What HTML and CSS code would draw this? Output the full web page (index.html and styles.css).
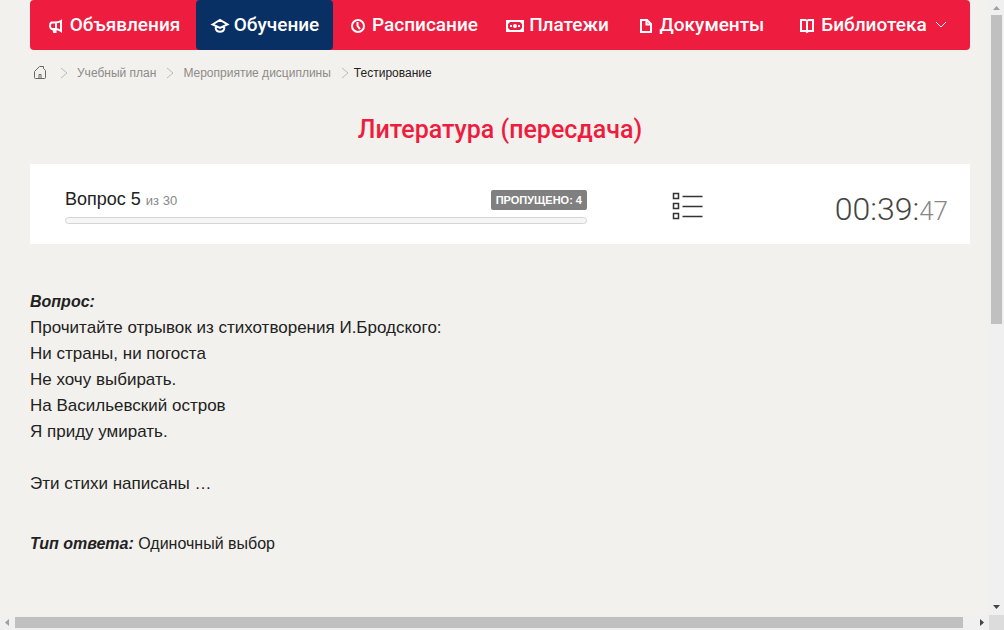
FILE: index.html
```html
<!DOCTYPE html>
<html lang="ru">
<head>
<meta charset="utf-8">
<title>Тестирование</title>
<meta name="viewport" content="width=device-width, initial-scale=1">
<link rel="stylesheet" href="styles.css">
</head>
<body class="shell">
<div class="page">
  <nav class="menu" aria-label="Главное меню">
    <a class="menu-item" href="#"><svg class="menu-icon" viewBox="0 0 20 20"><path d="M5.500 7.500H9c3 0 4.500-.5 6-1.500v10c-2-1.500-3-2-6-2H5.500c-2-1-2-5.500 0-6.500zM10 7.500v6"/><path class="menu-icon-fill" d="M6 13h4.500v5H7.300z"/></svg>Объявления</a>
    <a class="menu-item menu-item-active" href="#"><svg class="menu-icon" viewBox="0 0 20 20"><path d="M2.500 9.500L10 5l7.500 4.500L10 13zM5.800 11v3c1.200 3.800 7.200 3.800 8.400 0v-3"/></svg>Обучение</a>
    <a class="menu-item" href="#"><svg class="menu-icon" viewBox="0 0 20 20"><circle cx="10" cy="11" r="6"/><path d="M9.500 7v4l2.500 3"/></svg>Расписание</a>
    <a class="menu-item" href="#"><svg class="menu-icon" viewBox="0 0 20 20"><path d="M2 6h16v10H2z"/><path class="menu-icon-fill" d="M2 6h4L2 10zM18 6h-4l4 4zM2 16h4l-4-4zM18 16h-4l4-4zM5 10h2v2H5zM13 10h2v2h-2z"/><circle class="menu-icon-fill" cx="10" cy="11" r="2"/></svg>Платежи</a>
    <a class="menu-item" href="#"><svg class="menu-icon" viewBox="0 0 20 20"><path d="M5 5h6l4 4v8H5zM10.500 5v4.500H15"/></svg>Документы</a>
    <a class="menu-item" href="#"><svg class="menu-icon" viewBox="0 0 20 20"><path d="M4 5h4.500L10 6l1.500-1H16v11h-4.500L10 17l-1.500-1H4zM10 6v11"/></svg>Библиотека<svg class="menu-arrow" viewBox="0 0 12 8"><path d="M1 1l5 5 5-5"/></svg></a>
  </nav>

  <nav class="crumbs" aria-label="Навигация">
    <a class="crumb crumb-home" href="#" aria-label="Главная"><svg class="home-icon" viewBox="0 0 14 14"><path d="M1.500 5.500l5-5h4v2l2 2v7a1 1 0 0 1-1 1h-9a1 1 0 0 1-1-1zM6 12.500v-4h2v4"/></svg></a>
    <svg class="crumb-arrow" viewBox="0 0 8 12"><path d="M1 1l6 5-6 5"/></svg>
    <a class="crumb" href="#">Учебный план</a>
    <svg class="crumb-arrow" viewBox="0 0 8 12"><path d="M1 1l6 5-6 5"/></svg>
    <a class="crumb" href="#">Мероприятие дисциплины</a>
    <svg class="crumb-arrow" viewBox="0 0 8 12"><path d="M1 1l6 5-6 5"/></svg>
    <span class="crumb crumb-current">Тестирование</span>
  </nav>

  <main>
    <h1 class="title">Литература (пересдача)</h1>
    <section class="panel">
      <div class="status">
        <div class="status-row">
          <label class="status-label" for="progress">Вопрос 5 <small class="status-total">из 30</small></label>
          <span class="badge">ПРОПУЩЕНО: 4</span>
        </div>
        <progress class="progress" id="progress" value="0" max="30"></progress>
      </div>
      <button class="list-button" type="button" aria-label="Список вопросов"><svg class="list-icon" viewBox="0 0 32 29"><path d="M1.500 1.500h5v5h-5zM1.500 11.500h5v5h-5zM1.500 21.500h5v5h-5z"/><path d="M10.500 4.500h20M10.500 14.500h20M10.500 24.500h20"/></svg></button>
      <time class="timer">00:39:<span class="timer-seconds">47</span></time>
    </section>

    <section class="question">
      <strong class="lead">Вопрос:</strong>
      <p class="text">Прочитайте отрывок из стихотворения И.Бродского:<br>Ни страны, ни погоста<br>Не хочу выбирать.<br>На Васильевский остров<br>Я приду умирать.<br><br>Эти стихи написаны …</p>
      <p class="answer"><strong class="lead">Тип ответа:</strong> Одиночный выбор</p>
    </section>
  </main>
</div>
<div class="bar bar-vertical"><svg class="bar-arrow bar-arrow-dim" viewBox="0 0 15 15"><path d="M4 10h7L7.500 6z"/></svg><div class="thumb"></div><svg class="bar-arrow" viewBox="0 0 15 15"><path d="M4 5h7L7.500 9z"/></svg></div>
<div class="bar bar-horizontal"><svg class="bar-arrow bar-arrow-dim" viewBox="0 0 15 15"><path d="M9 4v7L5 7.500z"/></svg><div class="thumb"></div><svg class="bar-arrow" viewBox="0 0 15 15"><path d="M6 4v7l4-3.500z"/></svg></div>
<div class="corner"></div>
</body>
</html>
```
FILE: styles.css
```css
* { box-sizing: border-box; }

.shell {
  display: grid;
  grid-template: minmax(0, 1fr) 15px / minmax(0, 1fr) 15px;
  height: 100vh;
  margin: 0;
  background: #f3f1ed;
  color: #222;
  font-family: "Liberation Sans", Arial, sans-serif;
}

.page { padding: 0 19px 0 30px; overflow: hidden; }

svg { flex: none; fill: none; stroke: currentColor; }

.menu {
  display: grid;
  grid-template-columns: 166fr 137fr 160fr 128fr 158fr 186fr;
  height: 50px;
  padding-right: 5px;
  border-radius: 4px;
  background: #ee1c3e;
  font: 500 19px/24px Roboto, sans-serif;
}
.menu-item {
  display: flex;
  align-items: center;
  justify-content: center;
  gap: 4px;
  border-radius: 4px;
  color: #fff;
  text-decoration: none;
  white-space: nowrap;
}
.menu-item-active { background: #083064; }
.menu-icon { width: 20px; height: 20px; stroke-width: 2; }
.menu-icon-fill { fill: currentColor; stroke: none; }
.menu-arrow { width: 12px; height: 8px; margin-left: 4px; }

.crumbs {
  display: flex;
  align-items: center;
  height: 46px;
  padding-left: 3px;
  font-size: 12px;
}
.crumb { color: #8c8b89; text-decoration: none; }
.crumb-home { display: flex; color: #666; margin-right: 3px; }
.crumb-current { color: #222; margin-left: -4px; }
.home-icon { width: 14px; height: 14px; }
.crumb-arrow { width: 8px; height: 12px; margin: 0 9px 0 10px; color: #bbb; }

.title {
  margin: 16px 0 17px;
  color: #ee1c3e;
  font: 500 25px/35px Roboto, sans-serif;
  text-align: center;
}

.panel {
  display: flex;
  align-items: center;
  height: 80px;
  padding: 0 22px 0 35px;
  background: #fff;
}
.status { flex: 0 1 522px; padding-top: 3px; }
.status-row { display: flex; justify-content: space-between; align-items: center; }
.status-label { font-size: 18px; line-height: 22px; }
.status-total { color: #888; font-size: 13px; }
.badge {
  padding: 0 5px;
  border-radius: 2px;
  background: #808080;
  color: #fff;
  font-size: 11px;
  font-weight: bold;
  line-height: 20px;
}
.progress {
  display: block;
  appearance: none;
  width: 100%;
  height: 7px;
  margin-top: 5px;
  border: 1px solid #d5d5d5;
  border-radius: 4px;
  background: #f6f6f6;
}
.progress::-webkit-progress-bar { background: transparent; }
.list-button {
  display: flex;
  margin-left: 85px;
  padding: 4px 0 0;
  border: 0;
  background: none;
  color: #333;
}
.list-icon { width: 32px; height: 29px; stroke-width: 1.5; }
.timer {
  margin-left: auto;
  padding-top: 12px;
  color: #444;
  font: 300 32px/40px Roboto, sans-serif;
}
.timer-seconds { color: #888; font-size: 26px; }

.question { padding-top: 45px; font-size: 17px; line-height: 26px; }
.lead { font-size: 16px; font-style: italic; }
.text { margin: 0; }
.answer { margin: 34px 0 0; font-size: 16px; }

.bar { display: flex; background: #f0f0f0; }
.bar-vertical { flex-direction: column; }
.thumb { background: #c0c0c0; }
.bar-vertical .thumb { flex: 0 0 calc((100% - 30px) * 0.528); margin: 0 2px; }
.bar-vertical .bar-arrow:last-child { margin-top: auto; }
.bar-horizontal .thumb { flex: 0 0 calc((100% - 30px) * 0.989); margin: 2px 0; }
.bar-horizontal .bar-arrow:last-child { margin-left: auto; }
.bar-arrow { width: 15px; height: 15px; fill: #444; stroke: none; }
.bar-arrow-dim { fill: #a0a0a0; }
.corner { background: #dcdcdc; }
```
